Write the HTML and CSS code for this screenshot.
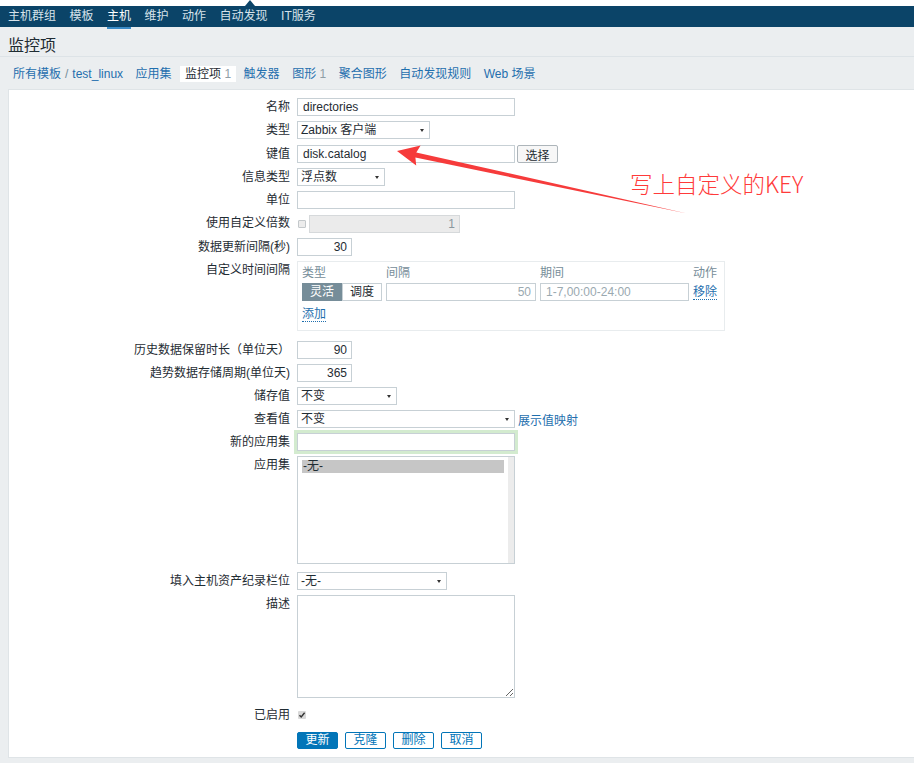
FILE: index.html
```html
<!DOCTYPE html>
<html lang="zh-CN">
<head>
<meta charset="utf-8">
<title>监控项</title>
<link rel="stylesheet" href="styles.css">
</head>
<body>
<header class="top">
  <nav class="nav">
    <a>主机群组</a><a>模板</a><a class="active">主机</a><a>维护</a><a>动作</a><a>自动发现</a><a>IT服务</a>
  </nav>
</header>
<div class="titlebar">监控项</div>
<div class="tabs">
  <span class="tab"><a class="lnk">所有模板</a><span class="sep">/</span><a class="lnk">test_linux</a></span>
  <a class="tab lnk">应用集</a>
  <span class="tab active">监控项 <span class="cnt">1</span></span>
  <a class="tab lnk">触发器</a>
  <a class="tab"><span class="lnk">图形</span> <span class="cnt">1</span></a>
  <a class="tab lnk">聚合图形</a>
  <a class="tab lnk">自动发现规则</a>
  <a class="tab lnk">Web 场景</a>
</div>
<main class="content">
  <div class="form">
    <div class="lbl">名称</div>
    <div class="ctl t"><input class="inp w218" value="directories"></div>

    <div class="lbl">类型</div>
    <div class="ctl t"><div class="select w133"><span>Zabbix 客户端</span><i class="arr"></i></div></div>

    <div class="lbl">键值</div>
    <div class="ctl t"><input class="inp w218" value="disk.catalog"><button class="btn-gray">选择</button></div>

    <div class="lbl">信息类型</div>
    <div class="ctl t"><div class="select w88"><span>浮点数</span><i class="arr"></i></div></div>

    <div class="lbl">单位</div>
    <div class="ctl t"><input class="inp w218" value=""></div>

    <div class="lbl">使用自定义倍数</div>
    <div class="ctl t"><span class="cb"></span><input class="inp dis w151 num" value="1" disabled></div>

    <div class="lbl">数据更新间隔(秒)</div>
    <div class="ctl t"><input class="inp w55 num" value="30"></div>

    <div class="lbl">自定义时间间隔</div>
    <div class="ctl">
      <div class="intervals">
        <div class="th">类型</div><div class="th">间隔</div><div class="th">期间</div><div class="th">动作</div>
        <div class="seg"><span class="on">灵活</span><span>调度</span></div>
        <input class="inp num ph" value="50">
        <input class="inp ph" value="1-7,00:00-24:00">
        <a class="dlink">移除</a>
        <a class="dlink add">添加</a>
      </div>
    </div>

    <div class="lbl">历史数据保留时长（单位天）</div>
    <div class="ctl"><input class="inp w55 num" value="90"></div>

    <div class="lbl">趋势数据存储周期(单位天)</div>
    <div class="ctl"><input class="inp w55 num" value="365"></div>

    <div class="lbl">储存值</div>
    <div class="ctl"><div class="select w100"><span>不变</span><i class="arr"></i></div></div>

    <div class="lbl">查看值</div>
    <div class="ctl"><div class="select w218"><span>不变</span><i class="arr"></i></div><a class="lnk map">展示值映射</a></div>

    <div class="lbl">新的应用集</div>
    <div class="ctl"><input class="inp w218 focus" value=""></div>

    <div class="lbl">应用集</div>
    <div class="ctl">
      <div class="listbox"><div class="opts"><div class="opt sel">-无-</div></div><div class="sbar"></div></div>
    </div>

    <div class="lbl">填入主机资产纪录栏位</div>
    <div class="ctl"><div class="select w150"><span>-无-</span><i class="arr"></i></div></div>

    <div class="lbl">描述</div>
    <div class="ctl"><textarea class="ta"></textarea></div>

    <div class="lbl chkrow">已启用</div>
    <div class="ctl chkrow"><span class="cb checked"><svg viewBox="0 0 8 8" width="8" height="8"><path d="M1.5 4.2 L3.2 6 L6.6 1.8" fill="none" stroke="#333" stroke-width="1.4"/></svg></span></div>

    <div class="lbl"></div>
    <div class="ctl btns">
      <button class="btn main">更新</button>
      <button class="btn alt">克隆</button>
      <button class="btn alt">删除</button>
      <button class="btn alt">取消</button>
    </div>
  </div>
</main>

<svg class="annot" width="914" height="763" viewBox="0 0 914 763">
  <polygon points="397,151 420.6,145.6 416.3,152.4 687,213.5 415.4,157.6 416.2,165.4" fill="#f63b3b"/>
</svg>
<div class="note">写上自定义的KEY</div>
</body>
</html>
```

FILE: styles.css
```css
html, body {
  margin: 0;
  padding: 0;
}
body {
  position: relative;
  width: 914px;
  height: 763px;
  overflow: hidden;
  background: #ebeef0;
  font-family: "Liberation Sans", "Noto Sans CJK SC", sans-serif;
  font-size: 12px;
  color: #1f2c33;
}
a { text-decoration: none; cursor: pointer; }

.top {
  background: #fff;
  padding-top: 6px;
}
.nav {
  position: relative;
  height: 21px;
  background: #0b4468;
  display: flex;
  align-items: center;
  padding-left: 8px;
}
.nav::before {
  content: "";
  position: absolute;
  left: 245px;
  top: -6px;
  border-left: 5.5px solid transparent;
  border-right: 5.5px solid transparent;
  border-bottom: 6px solid #0b4468;
}
.nav a {
  position: relative;
  color: #d6e2ea;
  line-height: 21px;
  margin-right: 13.5px;
}
.nav a.active { color: #fff; }
.nav a.active::after {
  content: "";
  position: absolute;
  left: 0;
  right: 0;
  bottom: -2px;
  height: 2px;
  background: #3a8cc8;
}

.titlebar {
  height: 30px;
  padding: 9px 0 0 8px;
  box-sizing: border-box;
  font-size: 16px;
  line-height: 20px;
  color: #1f2c33;
  border-bottom: 1px solid #dde3e7;
}

.tabs {
  display: flex;
  align-items: center;
  height: 32px;
  padding: 9px 0 7px 8px;
  box-sizing: border-box;
  gap: 2.5px;
}
.tab {
  display: inline-block;
  padding: 0 5px;
  line-height: 16px;
  height: 16px;
  white-space: nowrap;
}
.tab.active { background: #fff; color: #1f2c33; margin-left: 1px; }
.lnk { color: #1f6fae; }
.tab .sep { color: #768d99; margin: 0 4px 0 4px; }
.cnt { color: #8f9ea6; }

.content {
  margin-left: 8px;
  height: 669px;
  box-sizing: border-box;
  background: #fff;
  border: 1px solid #dfe4e7;
  border-right: 0;
  padding-top: 8px;
}
.form {
  display: grid;
  grid-template-columns: 281px 1fr;
  column-gap: 7px;
  row-gap: 5px;
  align-items: start;
}
.lbl {
  text-align: right;
  line-height: 18px;
  white-space: nowrap;
}
.ctl {
  display: flex;
  align-items: center;
  min-height: 18px;
}
.ctl.t { min-height: 18.3px; }

.inp {
  box-sizing: border-box;
  height: 18px;
  border: 1px solid #c7d0d5;
  padding: 0 5px;
  font-family: inherit;
  font-size: 12px;
  color: #1f2c33;
  background: #fff;
  outline: none;
  margin: 0;
}
.w218 { width: 218px; }
.w151 { width: 151px; }
.w55 { width: 55px; }
.w133 { width: 133px; }
.w88 { width: 88px; }
.w100 { width: 100px; }
.w150 { width: 150px; }
.num { text-align: right; padding-right: 4px; }
.dis {
  background: #ebebeb;
  border-color: #d6d9db;
  color: #8a979e;
  margin-left: 3px;
}
.ph { color: #9aa9b0; }
.focus {
  box-shadow: 0 0 0 3px #d3ebcf;
}

.select {
  box-sizing: border-box;
  height: 18px;
  border: 1px solid #c7d0d5;
  background: #fff;
  display: flex;
  align-items: center;
  justify-content: space-between;
  padding: 0 5px 0 3px;
  line-height: 16px;
}
.arr {
  width: 0;
  height: 0;
  border-left: 2.5px solid transparent;
  border-right: 2.5px solid transparent;
  border-top: 3.5px solid #333;
}

.btn-gray {
  box-sizing: border-box;
  height: 18px;
  width: 41px;
  margin-left: 2px;
  padding: 0;
  border: 1px solid #adb5ba;
  border-radius: 2px;
  background: #f7f7f7;
  font-family: inherit;
  font-size: 12px;
  color: #1f2c33;
}

.cb {
  box-sizing: border-box;
  width: 8px;
  height: 8px;
  border: 1px solid #c3c8cb;
  background: #ececec;
  border-radius: 1px;
  margin-left: 1px;
  display: inline-flex;
  align-items: center;
  justify-content: center;
}
.cb.checked {
  border: 0;
  background: #d9d9d9;
}

.intervals {
  box-sizing: border-box;
  width: 428px;
  height: 70px;
  margin-bottom: 5px;
  border: 1px solid #e8ecee;
  padding: 3px 6px 0 4px;
  display: grid;
  grid-template-columns: 80px 150px 149px auto;
  column-gap: 4px;
  grid-template-rows: 16px 18px 22px;
  row-gap: 2px;
  align-items: center;
}
.th { color: #768d99; line-height: 16px; }
.seg {
  display: flex;
  height: 18px;
}
.seg span {
  box-sizing: border-box;
  width: 40px;
  height: 18px;
  line-height: 16px;
  text-align: center;
  border: 1px solid #c7d0d5;
  background: #fff;
  color: #1f2c33;
}
.seg span.on {
  background: #768d99;
  border-color: #768d99;
  color: #fff;
}
.intervals .inp { width: 100%; }
.dlink {
  color: #1f6fae;
  border-bottom: 1px dotted #1f6fae;
  line-height: 14px;
  justify-self: start;
}
.dlink.add { grid-column: 1 / 2; }

.map { margin-left: 3px; }

.listbox {
  box-sizing: border-box;
  width: 218px;
  height: 108px;
  margin-bottom: 3px;
  border: 1px solid #c7d0d5;
  display: flex;
  padding: 3px 0 0 4px;
}
.opts { width: 202px; }
.opt { height: 13px; line-height: 13px; padding-left: 1px; }
.opt.sel { background: #c6c6c6; }
.sbar {
  margin: -3px 0 0 4px;
  width: 6px;
  background: #ececec;
}

.ta {
  box-sizing: border-box;
  width: 218px;
  height: 103px;
  border: 1px solid #c7d0d5;
  margin: 0;
  padding: 2px 4px;
  font-family: inherit;
  font-size: 12px;
  resize: both;
  outline: none;
  display: block;
}
.chkrow { margin-top: 3px; }
.btns { gap: 7px; margin-top: 2px; }
.btn {
  box-sizing: border-box;
  width: 41px;
  height: 17px;
  padding: 0;
  border: 1px solid #0275b8;
  border-radius: 2px;
  font-family: inherit;
  font-size: 12px;
  line-height: 15px;
}
.btn.main { background: #0275b8; color: #fff; }
.btn.alt { background: #fff; color: #0275b8; }

.annot {
  position: absolute;
  left: 0;
  top: 0;
  pointer-events: none;
}
.note {
  position: absolute;
  left: 630px;
  top: 172px;
  font-family: "Noto Sans CJK SC", sans-serif;
  font-size: 22.5px;
  line-height: 22px;
  font-weight: 300;
  color: #ff3a3a;
  white-space: nowrap;
}
```
